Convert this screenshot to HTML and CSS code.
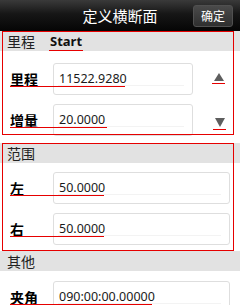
FILE: index.html
```html
<!DOCTYPE html>
<html>
<head>
<meta charset="utf-8">
<link rel="stylesheet" href="styles.css">
</head>
<body>
<div class="titlebar">
  <div></div>
  <div class="title">定义横断面</div>
  <div class="btn">确定</div>
</div>

<div class="section">
  <div class="head">里程<span class="start">Start</span></div>
  <div class="body body-first">
    <div class="row row-arrow">
      <div class="label">里程</div>
      <div class="input">11522.9280</div>
      <div class="arrow arrow-up"><div class="tri-up"></div><div class="aline"></div></div>
      <div class="uline w1"></div>
    </div>
    <div class="row row-arrow">
      <div class="label">增量</div>
      <div class="input">20.0000</div>
      <div class="arrow arrow-down"><div class="tri-down"></div><div class="aline"></div></div>
      <div class="uline w2"></div>
    </div>
  </div>
</div>

<div class="section">
  <div class="head">范围</div>
  <div class="body body-mid">
    <div class="row">
      <div class="label">左</div>
      <div class="input">50.0000</div>
      <div class="uline w3"></div>
    </div>
    <div class="row">
      <div class="label">右</div>
      <div class="input">50.0000</div>
      <div class="uline w3"></div>
    </div>
  </div>
</div>

<div class="section">
  <div class="head">其他</div>
  <div class="body body-last">
    <div class="row">
      <div class="label">夹角</div>
      <div class="input">090:00:00.00000</div>
      <div class="uline w5"></div>
    </div>
  </div>
</div>

<div class="box box1"></div>
<div class="box box2"></div>
<div class="start-line"></div>
</body>
</html>
```

FILE: styles.css
```css
html, body {
  margin: 0;
  padding: 0;
}
body {
  width: 240px;
  height: 305px;
  overflow: hidden;
  position: relative;
  background: #ffffff;
  font-family: "Noto Sans", "Noto Sans CJK SC", sans-serif;
  color: #222;
}
.titlebar {
  height: 31px;
  display: grid;
  grid-template-columns: 1fr auto 1fr;
  align-items: center;
  background: linear-gradient(#3a3a3a 0%, #161616 45%, #050505 100%);
}
.title {
  color: #fff;
  font-size: 15px;
  font-family: "Noto Sans CJK SC", sans-serif;
  line-height: 1;
}
.btn {
  justify-self: end;
  margin-right: 7px;
  width: 40px;
  height: 22px;
  box-sizing: border-box;
  border: 1px solid #505050;
  border-radius: 3px;
  background: linear-gradient(#4a4a4a, #2f2f2f);
  color: #fff;
  font-size: 12px;
  font-family: "Noto Sans CJK SC", sans-serif;
  display: flex;
  align-items: center;
  justify-content: center;
  line-height: 1;
}
.head {
  height: 20px;
  background: #e2e2e2;
  padding-left: 7px;
  display: flex;
  align-items: center;
  font-size: 14px;
  font-family: "Noto Sans CJK SC", sans-serif;
  color: #222;
  line-height: 1;
}
.start {
  margin-left: 15px;
  font-family: "Noto Sans", sans-serif;
  font-weight: bold;
  font-size: 13px;
  color: #111;
}
.body {
  display: flex;
  flex-direction: column;
  gap: 9px;
}
.body-first { padding: 12px 0 7px; }
.body-mid { padding: 9px 0 6px; }
.body-last { padding: 10px 0 0; }
.row {
  position: relative;
  height: 32px;
  display: grid;
  grid-template-columns: 43px 1fr;
  padding: 0 10px 0 10px;
  align-items: center;
}
.row-arrow {
  grid-template-columns: 43px 140px 40px;
  padding-right: 7px;
}
.label {
  font-size: 14px;
  font-weight: bold;
  color: #000;
  font-family: "Noto Sans CJK SC", sans-serif;
  line-height: 1;
}
.input {
  position: relative;
  height: 32px;
  box-sizing: border-box;
  border: 1px solid #dedede;
  border-radius: 3px;
  background: #fff;
  padding-left: 5px;
  display: flex;
  align-items: center;
  font-size: 12.5px;
  color: #1a1a1a;
  line-height: 1;
}
.input::after {
  content: "";
  position: absolute;
  left: 4px;
  right: 8px;
  bottom: 8px;
  height: 1px;
  background: #f3f3f3;
}
.arrow {
  align-self: start;
  justify-self: start;
  width: 13px;
  display: flex;
  flex-direction: column;
  align-items: center;
}
.arrow-up { margin-left: 19px; margin-top: 10px; }
.arrow-down { margin-left: 20px; margin-top: 14px; }
.tri-up {
  width: 0;
  height: 0;
  border-left: 5.5px solid transparent;
  border-right: 5.5px solid transparent;
  border-bottom: 8px solid #5e5e5e;
}
.tri-down {
  width: 0;
  height: 0;
  border-left: 5.5px solid transparent;
  border-right: 5.5px solid transparent;
  border-top: 9px solid #5e5e5e;
}
.aline {
  margin-top: 2px;
  width: 13px;
  height: 1px;
  background: #e60000;
}
.uline {
  position: absolute;
  left: 10px;
  top: 23px;
  height: 1px;
  background: #e60000;
}
.w1 { width: 115px; }
.w2 { width: 97px; }
.w3 { width: 94px; }
.w5 { width: 142px; }
.box {
  position: absolute;
  left: 2px;
  width: 232px;
  box-sizing: border-box;
  border: 1px solid #e60000;
}
.box1 { top: 31px; height: 104px; }
.box2 { top: 143px; height: 108px; }
.start-line {
  position: absolute;
  left: 49px;
  top: 50px;
  width: 34px;
  height: 1px;
  background: #e60000;
}
```
